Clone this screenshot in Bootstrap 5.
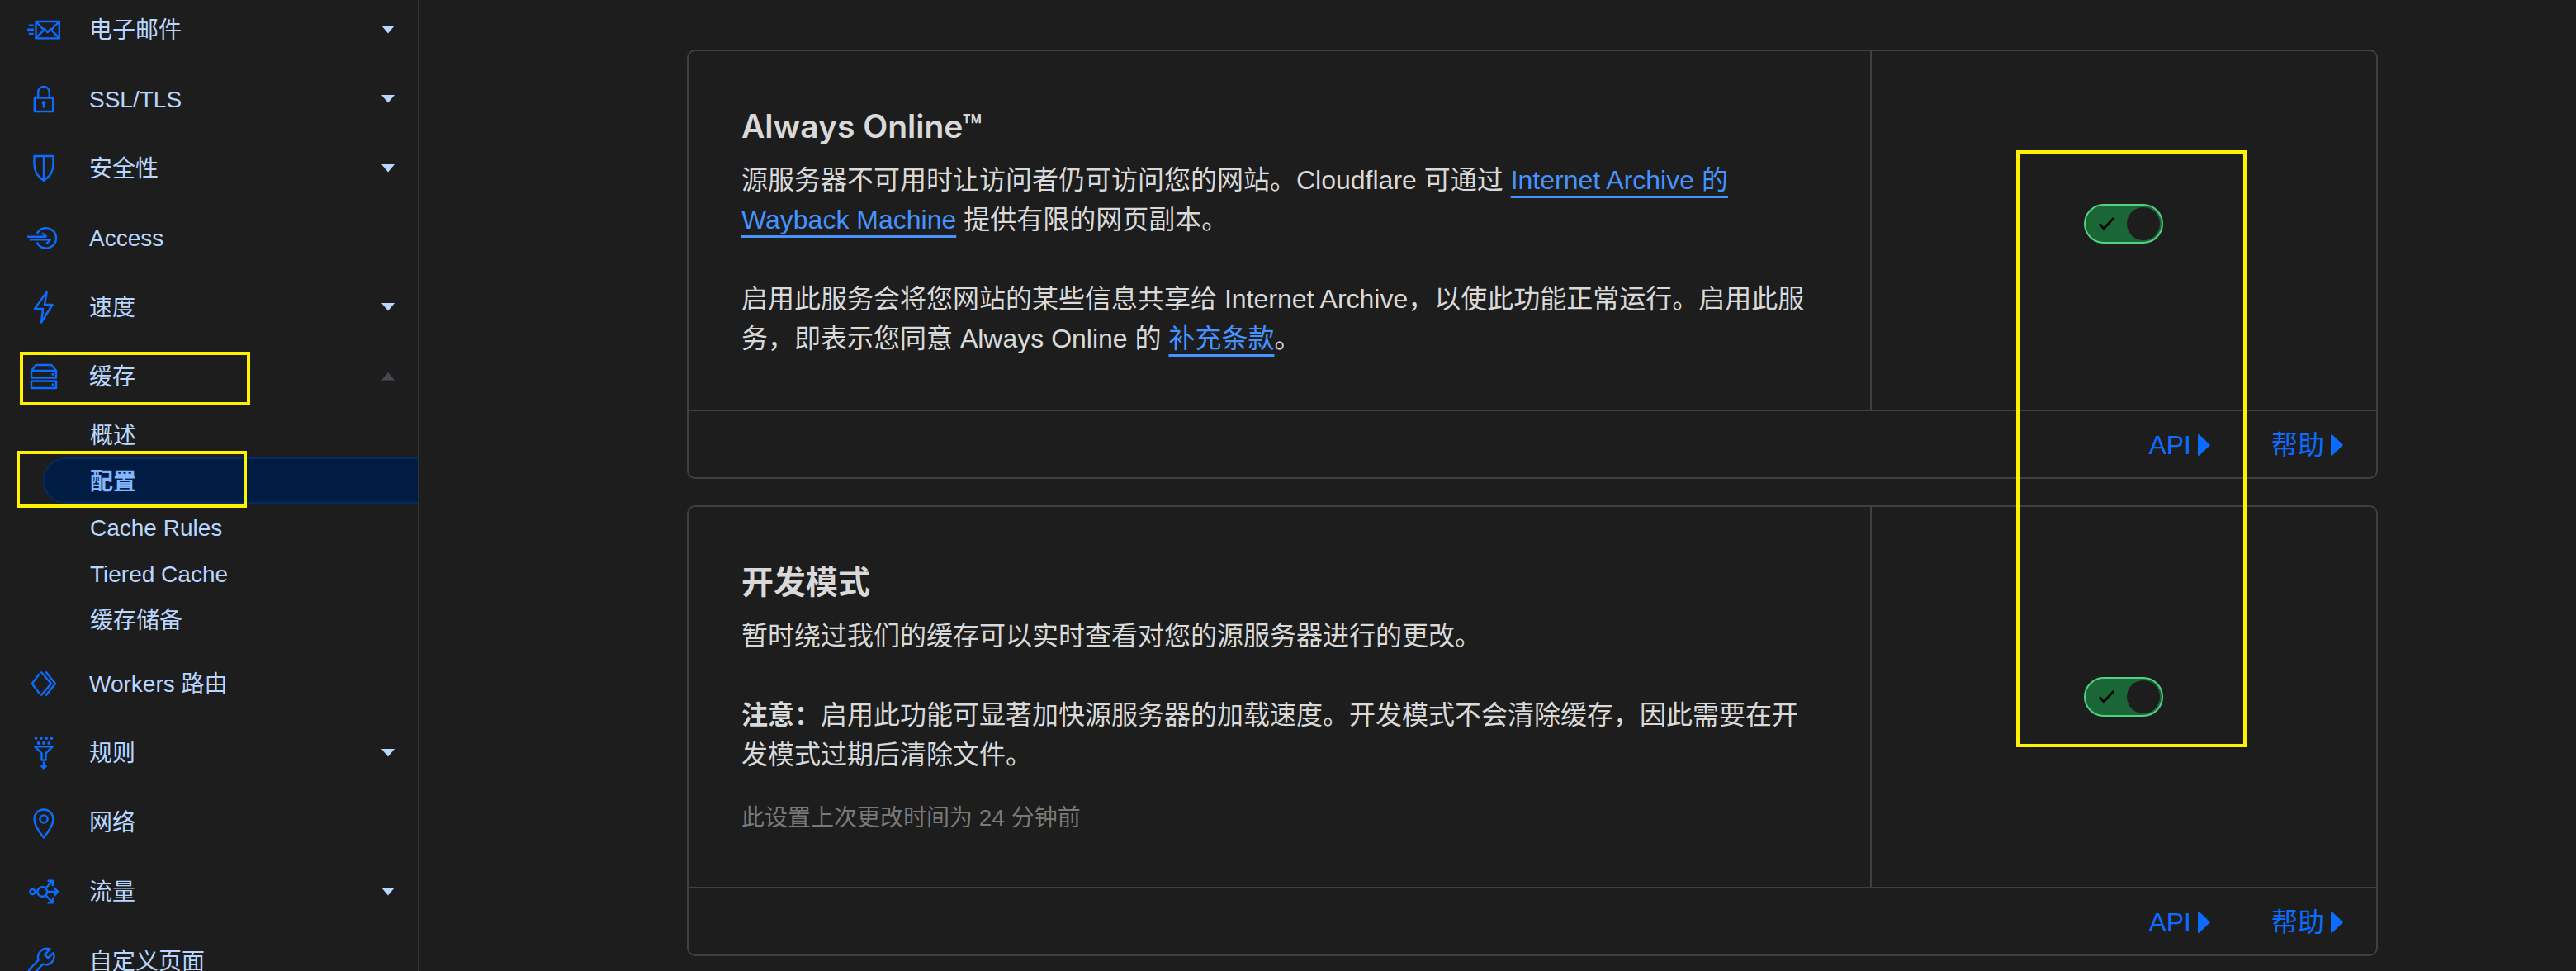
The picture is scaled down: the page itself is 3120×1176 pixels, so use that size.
<!DOCTYPE html>
<html lang="zh-CN">
<head>
<meta charset="utf-8">
<meta name="viewport" content="width=device-width, initial-scale=1">
<title>缓存 - 配置</title>
<link href="https://cdn.jsdelivr.net/npm/bootstrap@5.3.0/dist/css/bootstrap.min.css" rel="stylesheet">
<style>
  body { background: #1d1d1d; color: #d9d9d9; font-family: "Liberation Sans", "Noto Sans CJK SC", sans-serif; font-size: 32px; line-height: 48px; }
  .side { width: 508px; border-right: 2px solid #313131; font-size: 28px; line-height: 56px; }
  .side-list { gap: 12px; }
  .side-item { height: 72px; padding: 0 28px 0 32px; gap: 34px; color: #b9d6ff; text-decoration: none; background: none; border: 0; width: 100%; text-align: left; }
  .side-item span { padding-top: 2px; }
  .side-icon { width: 42px; height: 42px; flex: none; fill: none; stroke: #0b6dff; stroke-width: 2.4; stroke-linejoin: round; }
  .side-icon .dot { fill: #0b6dff; stroke: none; }
  .side-caret { width: 16px; height: 10px; fill: #b9d6ff; }
  .side-caret.open { fill: #464a52; }
  .side-sub { padding: 6px 0 2px; }
  .side-sub a { display: block; height: 56px; margin-left: 52px; padding-top: 2px; padding-left: 57px; color: #b9d6ff; text-decoration: none; }
  .side-sub a.active { background: #001c43; border: 2px solid #002b66; border-right: 0; border-radius: 28px 0 0 28px; padding-left: 55px; line-height: 52px; color: #82b6ff; font-weight: 600; }
  .callout { position: absolute; border: 4px solid #fff200; pointer-events: none; }
  .callout-cache { left: 24px; top: 6px; width: 279px; height: 65px; }
  .callout-config { left: 20px; top: -8px; width: 279px; height: 69px; }
  .callout-switches { right: 159px; top: 122px; width: 279px; height: 723px; }
  .content { padding: 60px 0 18px 84px; }
  .panels { max-width: 2048px; gap: 32px; }
  .panel { border: 2px solid #404040; border-radius: 10px; }
  .panel-text { flex: 1; padding: 66px 64px 62px; }
  .panel-switch { width: 30%; border-left: 2px solid #404040; }
  .panel-text h2 { font-family: Inter, "Noto Sans CJK SC", sans-serif; font-size: 39px; line-height: 50px; font-weight: 600; margin: 0 0 16px; }
  .panel-text p { margin: 0 0 48px; }
  .panel-text p:last-child { margin: 0; }
  .panel-text p.changed { margin-top: -16px; font-size: 28px; line-height: 42px; color: #797979; }
  .panel-text a { color: #4693ff; text-decoration: underline 3px; text-underline-offset: 8px; text-decoration-skip-ink: none; }
  .panel-foot { height: 82px; border-top: 2px solid #404040; padding: 2px 40px 0; gap: 74px; }
  .panel-foot button { background: none; border: 0; padding: 0; color: #0b6dff; gap: 8px; }
  .panel-foot svg { width: 15px; height: 26px; fill: #0b6dff; }
  .form-check-input.toggle { width: 96px; height: 48px; margin: 0; border: 2px solid #4fd180; border-radius: 24px; background: #1b6637 url("data:image/svg+xml,%3Csvg xmlns='http://www.w3.org/2000/svg' viewBox='0 0 92 44'%3E%3Cpath d='M17 22l5 6 12-13' fill='none' stroke='%23000' stroke-width='2.6'/%3E%3Ccircle cx='70' cy='22' r='20' fill='%231d1d1d'/%3E%3C/svg%3E") center / 100% 100% no-repeat; }
</style>
<script src="https://cdn.jsdelivr.net/npm/bootstrap@5.3.0/dist/js/bootstrap.bundle.min.js"></script>
</head>
<body>
<div class="d-flex vh-100 overflow-hidden">
  <nav class="side flex-shrink-0">
    <ul class="side-list list-unstyled d-flex flex-column m-0">
      <li><button class="side-item d-flex align-items-center">
        <svg class="side-icon" viewBox="0 0 42 42"><path d="M11.5 11h28.3v20.4H11.5zM11.5 11l8.5 9 2 0 3.600 4.200 3.600-4.200 2 0 8.500-9M11.500 31.400l9.500-10M39.800 31.400l-9.500-10M2.700 15.800h6M1 20.800h8M2.700 25.900h6"/></svg>
        <span class="flex-grow-1">电子邮件</span><svg class="side-caret" viewBox="0 0 16 10"><path d="M0 0h16L8 9.500z"/></svg></button></li>
      <li><button class="side-item d-flex align-items-center">
        <svg class="side-icon" viewBox="0 0 42 42"><path d="M9.800 19.500h22.400v16.500H9.800zM14.200 19.500V12.700a6.800 6.800 0 0 1 13.600 0v6.800M21 26v5.500"/><circle class="dot" cx="21" cy="25.700" r="2.400"/></svg>
        <span class="flex-grow-1">SSL/TLS</span><svg class="side-caret" viewBox="0 0 16 10"><path d="M0 0h16L8 9.500z"/></svg></button></li>
      <li><button class="side-item d-flex align-items-center">
        <svg class="side-icon" viewBox="0 0 42 42"><path d="M9.500 6h23v10c0 9-5.500 16-11.500 19.700C15 32 9.500 25 9.500 16zM21 6v29"/></svg>
        <span class="flex-grow-1">安全性</span><svg class="side-caret" viewBox="0 0 16 10"><path d="M0 0h16L8 9.500z"/></svg></button></li>
      <li><a href="#" class="side-item d-flex align-items-center">
        <svg class="side-icon" viewBox="0 0 42 42"><path d="M12.700 16.300a12.200 12.200 0 1 1 0 10.200M1 19.700h23M3.700 23.400h25M19 15.200l5.500 4.500M29.300 23l-5.300 5.300"/></svg>
        <span class="flex-grow-1">Access</span></a></li>
      <li><button class="side-item d-flex align-items-center">
        <svg class="side-icon" viewBox="0 0 42 42"><path d="M24.700 2.500L10 23h10l-2 16.500L31.500 18H22z"/></svg>
        <span class="flex-grow-1">速度</span><svg class="side-caret" viewBox="0 0 16 10"><path d="M0 0h16L8 9.500z"/></svg></button></li>
      <li class="position-relative"><button class="side-item d-flex align-items-center" aria-expanded="true">
        <svg class="side-icon" viewBox="0 0 42 42"><path d="M6 14h30v8.500H6zM6 26.500h30v8.500H6zM6 14l5.600-7h18.800L36 14"/><circle class="dot" cx="32" cy="18.200" r="1.500"/><circle class="dot" cx="32" cy="30.700" r="1.500"/></svg>
        <span class="flex-grow-1">缓存</span><svg class="side-caret open" viewBox="0 0 16 10"><path d="M0 9.500h16L8 0z"/></svg></button>
        <div class="callout callout-cache"></div>
        <ul class="side-sub list-unstyled">
          <li><a href="#">概述</a></li>
          <li class="position-relative"><a href="#" class="active">配置</a><div class="callout callout-config"></div></li>
          <li><a href="#">Cache Rules</a></li>
          <li><a href="#">Tiered Cache</a></li>
          <li><a href="#">缓存储备</a></li>
        </ul></li>
      <li><a href="#" class="side-item d-flex align-items-center">
        <svg class="side-icon" viewBox="0 0 42 42"><path d="M15.800 9L6.800 21l9 12M17.500 6.500L30 21 17.500 35.500M23.500 6.500L35 21 23.500 35.500"/></svg>
        <span class="flex-grow-1">Workers 路由</span></a></li>
      <li><button class="side-item d-flex align-items-center">
        <svg class="side-icon" viewBox="0 0 42 42"><circle class="dot" cx="11.500" cy="3" r="1.900"/><circle class="dot" cx="17.800" cy="3" r="1.900"/><circle class="dot" cx="24.200" cy="3" r="1.900"/><circle class="dot" cx="30.500" cy="3" r="1.900"/><circle class="dot" cx="14.700" cy="9" r="1.900"/><circle class="dot" cx="21" cy="9" r="1.900"/><circle class="dot" cx="27.300" cy="9" r="1.900"/><path d="M10.300 13.300h21.400l-8.200 8v8.200h-5v-8.200zM21 31.500v8M17.700 36.300l3.300 3.200 3.300-3.200"/></svg>
        <span class="flex-grow-1">规则</span><svg class="side-caret" viewBox="0 0 16 10"><path d="M0 0h16L8 9.500z"/></svg></button></li>
      <li><a href="#" class="side-item d-flex align-items-center">
        <svg class="side-icon" viewBox="0 0 42 42"><path d="M21 5.500c-6.500 0-11.500 5-11.500 11.500 0 8 7 17 11.500 22.500C25.500 34 32.500 25 32.500 17c0-6.500-5-11.500-11.500-11.500z"/><circle cx="21" cy="17" r="4.600"/></svg>
        <span class="flex-grow-1">网络</span></a></li>
      <li><button class="side-item d-flex align-items-center">
        <svg class="side-icon" viewBox="0 0 42 42"><circle cx="7.300" cy="21" r="3"/><circle cx="19.300" cy="21" r="5.800"/><path d="M10.300 21h3.200M25 21h13M33.500 16.200l4.800 4.800-4.800 4.800M23.300 16.700l8.500-9M25.500 7.700h6.400v6.500M23.300 25.300l8.500 9M25.500 34.300h6.400v-6.500"/></svg>
        <span class="flex-grow-1">流量</span><svg class="side-caret" viewBox="0 0 16 10"><path d="M0 0h16L8 9.500z"/></svg></button></li>
      <li><a href="#" class="side-item d-flex align-items-center">
        <svg class="side-icon" viewBox="0 0 42 42"><path d="M28.500 6.500l-6.300 6.700 4 4.200 6.500-6.400c3.500 8.500-4 16.500-12.700 13.700L9.500 35.500c-4 3-8-1-5.500-5L14.500 20C12 11 20 3.500 28.500 6.500z"/></svg>
        <span class="flex-grow-1">自定义页面</span></a></li>
    </ul>
  </nav>

  <main class="content flex-grow-1">
    <div class="panels position-relative mx-auto d-flex flex-column">
      <section class="panel">
        <div class="d-flex">
          <div class="panel-text">
            <h2 id="always-online">Always Online™</h2>
            <p>源服务器不可用时让访问者仍可访问您的网站。Cloudflare 可通过 <a href="#">Internet Archive 的<br>Wayback Machine</a> 提供有限的网页副本。</p>
            <p>启用此服务会将您网站的某些信息共享给 Internet Archive，以使此功能正常运行。启用此服务，即表示您同意 Always Online 的 <a href="#">补充条款</a>。</p>
          </div>
          <div class="panel-switch d-flex align-items-center justify-content-center pb-3">
            <input class="form-check-input toggle" type="checkbox" role="switch" aria-labelledby="always-online" checked>
          </div>
        </div>
        <div class="panel-foot d-flex justify-content-end align-items-center">
          <button class="d-flex align-items-center">API<svg viewBox="0 0 15 26"><path d="M0 1.500Q0 0 1.500 0L15 13 1.500 26Q0 26 0 24.500z"/></svg></button>
          <button class="d-flex align-items-center">帮助<svg viewBox="0 0 15 26"><path d="M0 1.500Q0 0 1.500 0L15 13 1.500 26Q0 26 0 24.500z"/></svg></button>
        </div>
      </section>
      <section class="panel">
        <div class="d-flex">
          <div class="panel-text">
            <h2 id="dev-mode">开发模式</h2>
            <p>暂时绕过我们的缓存可以实时查看对您的源服务器进行的更改。</p>
            <p><strong>注意：</strong>启用此功能可显著加快源服务器的加载速度。开发模式不会清除缓存，因此需要在开发模式过期后清除文件。</p>
            <p class="changed">此设置上次更改时间为 24 分钟前</p>
          </div>
          <div class="panel-switch d-flex align-items-center justify-content-center">
            <input class="form-check-input toggle" type="checkbox" role="switch" aria-labelledby="dev-mode" checked>
          </div>
        </div>
        <div class="panel-foot d-flex justify-content-end align-items-center">
          <button class="d-flex align-items-center">API<svg viewBox="0 0 15 26"><path d="M0 1.500Q0 0 1.500 0L15 13 1.500 26Q0 26 0 24.500z"/></svg></button>
          <button class="d-flex align-items-center">帮助<svg viewBox="0 0 15 26"><path d="M0 1.500Q0 0 1.500 0L15 13 1.500 26Q0 26 0 24.500z"/></svg></button>
        </div>
      </section>
      <div class="callout callout-switches"></div>
    </div>
  </main>
</div>
</body>
</html>
